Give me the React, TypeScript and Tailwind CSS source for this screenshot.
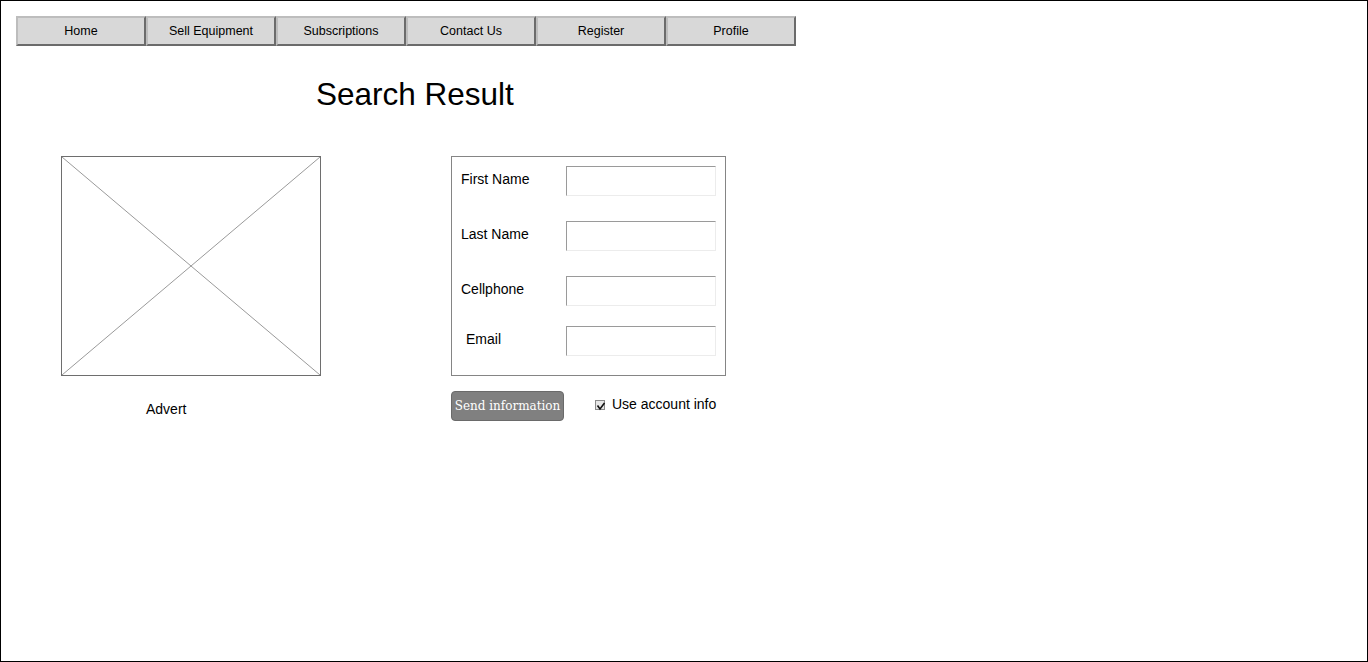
import * as React from 'react'

const navItems = ['Home', 'Sell Equipment', 'Subscriptions', 'Contact Us', 'Register', 'Profile']

const fields = [
	{ label: 'First Name', indent: false, gap: '' },
	{ label: 'Last Name', indent: false, gap: 'mt-[25px]' },
	{ label: 'Cellphone', indent: false, gap: 'mt-[25px]' },
	{ label: 'Email', indent: true, gap: 'mt-[20px]' },
]

function NavButton({ label }: { label: string }) {
	return (
		<button
			type="button"
			className="flex h-[30px] w-[130px] items-center justify-center border-2 border-t-[#bdbdbd] border-l-[#bdbdbd] border-b-[#6b6b6b] border-r-[#6b6b6b] bg-[#d8d8d8] text-[12.5px] text-black"
		>
			{label}
		</button>
	)
}

function ImagePlaceholder() {
	return (
		<div className="relative h-[220px] w-[260px] border border-[#6e6e6e]">
			<svg className="absolute inset-0 h-full w-full" viewBox="0 0 258 218" preserveAspectRatio="none">
				<line x1="0" y1="0" x2="258" y2="218" stroke="#9a9a9a" strokeWidth="1" />
				<line x1="258" y1="0" x2="0" y2="218" stroke="#9a9a9a" strokeWidth="1" />
			</svg>
		</div>
	)
}

function CheckIcon() {
	return (
		<svg width="11" height="12" viewBox="0 0 11 12" className="mt-[3px] shrink-0">
			<rect x="0.5" y="0.5" width="9" height="9" fill="#e6e6e6" stroke="#8a8a8a" />
			<path d="M2.5 5.5 L5 9 L9.5 3" fill="none" stroke="#111" strokeWidth="1.6" />
		</svg>
	)
}

export default function App() {
	return (
		<div className="h-[662px] w-[1368px] overflow-hidden border border-black bg-white pt-[15px] pl-[15px] font-['Liberation_Sans',Arial,sans-serif] text-black">
			<nav className="flex">
				{navItems.map((item) => (
					<NavButton key={item} label={item} />
				))}
			</nav>

			<h1 className="mt-[30px] ml-[300px] text-[31.5px] leading-[37px] font-normal">Search Result</h1>

			<div className="mt-[43px] ml-[45px] flex gap-[130px]">
				<div className="flex flex-col">
					<ImagePlaceholder />
					<span className="mt-[25px] ml-[85px] text-[14px] leading-[16px]">Advert</span>
				</div>

				<div className="flex flex-col">
					<div className="flex h-[220px] w-[275px] flex-col border border-[#858585] pt-[9px] pl-[9px]">
						{fields.map((f) => (
							<div key={f.label} className={`flex items-start ${f.gap}`}>
								<label className={`mt-[5px] w-[105px] text-[14px] leading-[16px] ${f.indent ? 'pl-[5px]' : ''}`}>
									{f.label}
								</label>
								<input
									type="text"
									className="h-[30px] w-[150px] border border-t-[#9a9a9a] border-l-[#9a9a9a] border-b-[#ececec] border-r-[#ececec] bg-white outline-none"
								/>
							</div>
						))}
					</div>

					<div className="mt-[15px] flex items-center">
						<button
							type="button"
							className="flex h-[30px] w-[113px] items-center justify-center rounded-[4px] border border-[#6a6a6a] bg-[#808080] font-['DejaVu_Serif',serif] text-[12px] text-white"
						>
							Send information
						</button>
						<div className="ml-[31px] -mt-[4px] flex items-center gap-[6px]">
							<CheckIcon />
							<span className="text-[14px] leading-[16px]">Use account info</span>
						</div>
					</div>
				</div>
			</div>
		</div>
	)
}
